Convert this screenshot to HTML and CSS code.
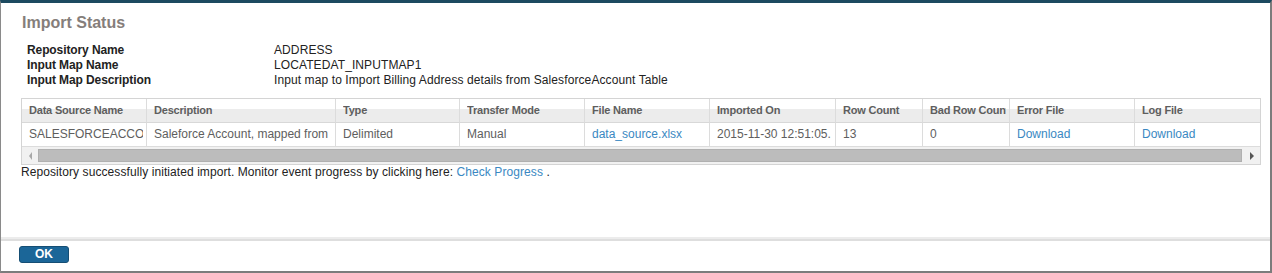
FILE: index.html
```html
<!DOCTYPE html>
<html>
<head>
<meta charset="utf-8">
<title>Import Status</title>
<link rel="stylesheet" href="styles.css">
</head>
<body>
<div class="dialog">
  <div class="content">
    <h1 class="title">Import Status</h1>
    <div class="info">
      <div class="info-label">Repository Name</div><div class="info-value">ADDRESS</div>
      <div class="info-label">Input Map Name</div><div class="info-value">LOCATEDAT_INPUTMAP1</div>
      <div class="info-label">Input Map Description</div><div class="info-value">Input map to Import Billing Address details from SalesforceAccount Table</div>
    </div>
    <div class="grid-wrap">
      <div class="grid" role="table">
        <div class="row head" role="row">
          <div class="cell" role="columnheader"><span class="clip">Data Source Name</span></div>
          <div class="cell" role="columnheader"><span class="clip">Description</span></div>
          <div class="cell" role="columnheader"><span class="clip">Type</span></div>
          <div class="cell" role="columnheader"><span class="clip">Transfer Mode</span></div>
          <div class="cell" role="columnheader"><span class="clip">File Name</span></div>
          <div class="cell" role="columnheader"><span class="clip">Imported On</span></div>
          <div class="cell" role="columnheader"><span class="clip">Row Count</span></div>
          <div class="cell" role="columnheader"><span class="clip">Bad Row Count</span></div>
          <div class="cell" role="columnheader"><span class="clip">Error File</span></div>
          <div class="cell" role="columnheader"><span class="clip">Log File</span></div>
        </div>
        <div class="row data" role="row">
          <div class="cell" role="cell"><span class="clip">SALESFORCEACCOUNT</span></div>
          <div class="cell" role="cell"><span class="clip">Saleforce Account, mapped from ...</span></div>
          <div class="cell" role="cell"><span class="clip">Delimited</span></div>
          <div class="cell" role="cell"><span class="clip">Manual</span></div>
          <div class="cell" role="cell"><span class="clip"><a class="link" href="#">data_source.xlsx</a></span></div>
          <div class="cell" role="cell"><span class="clip">2015-11-30 12:51:05.</span></div>
          <div class="cell" role="cell"><span class="clip">13</span></div>
          <div class="cell" role="cell"><span class="clip">0</span></div>
          <div class="cell" role="cell"><span class="clip"><a class="link" href="#">Download</a></span></div>
          <div class="cell" role="cell"><span class="clip"><a class="link" href="#">Download</a></span></div>
        </div>
      </div>
      <div class="hscroll">
        <span class="arrow arrow-left"></span>
        <div class="thumb"></div>
        <span class="arrow arrow-right"></span>
      </div>
    </div>
    <p class="status">Repository successfully initiated import. Monitor event progress by clicking here: <a class="link" href="#">Check Progress</a> .</p>
  </div>
  <div class="footer">
    <button class="ok" type="button">OK</button>
  </div>
</div>
</body>
</html>
```

FILE: styles.css
```css
* { box-sizing: border-box; }

html, body {
  margin: 0;
  padding: 0;
  background: #ffffff;
}

body {
  font-family: "Liberation Sans", Arial, sans-serif;
  font-size: 12px;
  color: #333333;
}

.dialog {
  width: 1272px;
  height: 273px;
  display: flex;
  flex-direction: column;
  border-top: 3px solid #1c4a60;
  border-left: 1px solid #8a8a8a;
  border-right: 2px solid #7c7c7c;
  border-bottom: 2px solid #7c7c7c;
  background: #ffffff;
}

.content {
  flex: 1;
  padding: 10px 9px 0 20px;
}

.title {
  margin: 0 0 10px 1px;
  font-size: 16px;
  line-height: 20px;
  font-weight: bold;
  color: #857e7b;
}

.info {
  display: grid;
  grid-template-columns: 247px auto;
  padding-left: 6px;
  line-height: 15px;
  color: #222222;
  margin-bottom: 10px;
}

.info-label {
  font-weight: bold;
  letter-spacing: -0.1px;
}

.info-value {
  letter-spacing: 0.1px;
}

.grid-wrap {
  width: 1240px;
  border: 1px solid #d4d4d4;
}

.row {
  display: grid;
  grid-template-columns: 124px 189px 124px 125px 125px 126px 87px 87px 125px 126px;
}

.cell {
  padding: 0 3px 0 7px;
  white-space: nowrap;
  border-left: 1px solid #dcdcdc;
  overflow: hidden;
}

.cell:first-child {
  border-left: 0;
}

.clip {
  display: block;
  overflow: hidden;
}

.head .cell {
  height: 24px;
  line-height: 23px;
  font-size: 11px;
  font-weight: bold;
  letter-spacing: -0.2px;
  color: #5e5e5e;
  background: linear-gradient(to bottom, #ffffff 0, #ffffff 10px, #ececec 10px, #ececec 100%);
  border-bottom: 1px solid #d8d8d8;
}

.data .cell {
  height: 24px;
  line-height: 23px;
  color: #5e5e5e;
  border-bottom: 1px solid #dcdcdc;
}

.link {
  color: #3a88c2;
  text-decoration: none;
}

.hscroll {
  height: 17px;
  background: #f1f1f1;
  display: flex;
  align-items: center;
  padding: 0 6px 0 7px;
}

.arrow {
  width: 0;
  height: 0;
  border-top: 4px solid transparent;
  border-bottom: 4px solid transparent;
}

.arrow-left {
  border-right: 3px solid #a8a8a8;
  margin-right: 6px;
}

.arrow-right {
  border-left: 4px solid #555555;
  margin-left: 8px;
}

.thumb {
  flex: 1;
  height: 13px;
  background: #bcbcbc;
  border: 1px solid #b0b0b0;
}

.status {
  margin: 0;
  line-height: 15px;
  letter-spacing: 0.08px;
  color: #222222;
}

.footer {
  height: 34px;
  border-top: 2px solid #ececec;
  box-shadow: inset 0 2px 0 #dedede;
  padding: 7px 0 0 18px;
}

.ok {
  display: block;
  width: 50px;
  height: 17px;
  padding: 0;
  margin: 0;
  border: 1px solid #154e74;
  border-radius: 3px;
  background: #1b6698;
  color: #ffffff;
  font-family: "Liberation Sans", Arial, sans-serif;
  font-size: 12px;
  font-weight: bold;
  line-height: 15px;
  text-align: center;
}
```
